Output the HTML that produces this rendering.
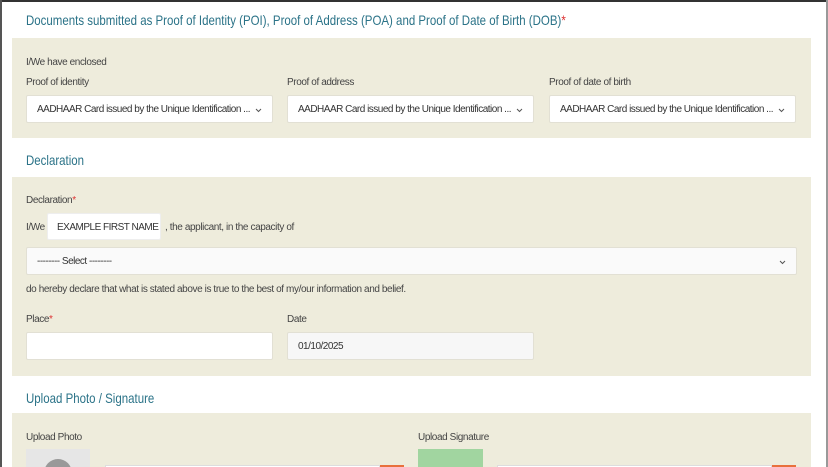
<!DOCTYPE html>
<html><head><style>
*{margin:0;padding:0;box-sizing:border-box}
html,body{width:828px;height:467px;overflow:hidden}
body{background:#fff;font-family:"Liberation Sans",sans-serif;position:relative}
.a{position:absolute}
.panel{position:absolute;left:12px;width:799px;background:#eeecdc}
.h{position:absolute;left:26px;font-size:14px;color:#2b7388;transform:scaleX(0.82);transform-origin:left top;white-space:nowrap}
.l{position:absolute;font-size:10px;color:#444;letter-spacing:-0.4px;white-space:nowrap}
.sel{position:absolute;background:#fff;border:1px solid #e2e0d4;border-radius:2px;font-size:10px;color:#333;padding-left:10px;line-height:27px;height:28px;white-space:nowrap;overflow:hidden;letter-spacing:-0.5px}
.sel svg{position:absolute;right:10px;top:12px}
.r{color:#d33}
</style></head><body>
<div class="a" style="left:0;top:0;width:828px;height:2px;background:#333"></div>
<div class="a" style="left:0;top:0;width:2px;height:467px;background:#555"></div>
<div class="a" style="left:826px;top:0;width:2px;height:467px;background:#999"></div>

<div class="h" style="top:12px">Documents submitted as Proof of Identity (POI), Proof of Address (POA) and Proof of Date of Birth (DOB)<span class="r">*</span></div>
<div class="panel" style="top:38px;height:100px"></div>
<div class="l" style="left:26px;top:57px">I/We have enclosed</div>
<div class="l" style="left:26px;top:77px">Proof of identity</div>
<div class="l" style="left:287px;top:77px">Proof of address</div>
<div class="l" style="left:549px;top:77px">Proof of date of birth</div>
<div class="sel" style="left:26px;top:95px;width:247px">AADHAAR Card issued by the Unique Identification ...<svg width="7" height="5"><path d="M1 1l2.5 2.5L6 1" stroke="#555" fill="none"/></svg></div>
<div class="sel" style="left:287px;top:95px;width:247px">AADHAAR Card issued by the Unique Identification ...<svg width="7" height="5"><path d="M1 1l2.5 2.5L6 1" stroke="#555" fill="none"/></svg></div>
<div class="sel" style="left:549px;top:95px;width:247px">AADHAAR Card issued by the Unique Identification ...<svg width="7" height="5"><path d="M1 1l2.5 2.5L6 1" stroke="#555" fill="none"/></svg></div>

<div class="h" style="top:152px">Declaration</div>
<div class="panel" style="top:177px;height:199px"></div>
<div class="l" style="left:26px;top:195px">Declaration<span class="r">*</span></div>
<div class="l" style="left:26px;top:222px">I/We</div>
<div class="sel" style="left:47px;top:213px;width:114px;padding-left:9px;height:27px;line-height:27px;border-color:#eee">EXAMPLE FIRST NAME</div>
<div class="l" style="left:165px;top:222px">, the applicant, in the capacity of</div>
<div class="sel" style="left:26px;top:247px;width:771px;background:#fafafa">-------- Select --------<svg width="7" height="5"><path d="M1 1l2.5 2.5L6 1" stroke="#555" fill="none"/></svg></div>
<div class="l" style="left:26px;top:284px">do hereby declare that what is stated above is true to the best of my/our information and belief.</div>
<div class="l" style="left:26px;top:314px">Place<span class="r">*</span></div>
<div class="l" style="left:287px;top:314px">Date</div>
<div class="sel" style="left:26px;top:332px;width:247px"></div>
<div class="sel" style="left:287px;top:332px;width:247px;background:#f7f7f7">01/10/2025</div>

<div class="h" style="top:390px">Upload Photo / Signature</div>
<div class="panel" style="top:413px;height:60px"></div>
<div class="l" style="left:26px;top:432px">Upload Photo</div>
<div class="l" style="left:418px;top:432px">Upload Signature</div>
<div class="a" style="left:26px;top:449px;width:64px;height:30px;background:#e6e6e6;overflow:hidden"><div class="a" style="left:18px;top:10px;width:28px;height:28px;border-radius:50%;background:#999"></div></div>
<div class="a" style="left:105px;top:465px;width:275px;height:10px;background:#fff;border:1px solid #ddd"></div>
<div class="a" style="left:380px;top:465px;width:24px;height:10px;background:#e8703c"></div>
<div class="a" style="left:418px;top:449px;width:65px;height:30px;background:#a1d5a0"></div>
<div class="a" style="left:497px;top:465px;width:275px;height:10px;background:#fff;border:1px solid #ddd"></div>
<div class="a" style="left:772px;top:465px;width:24px;height:10px;background:#e8703c"></div>
</body></html>
